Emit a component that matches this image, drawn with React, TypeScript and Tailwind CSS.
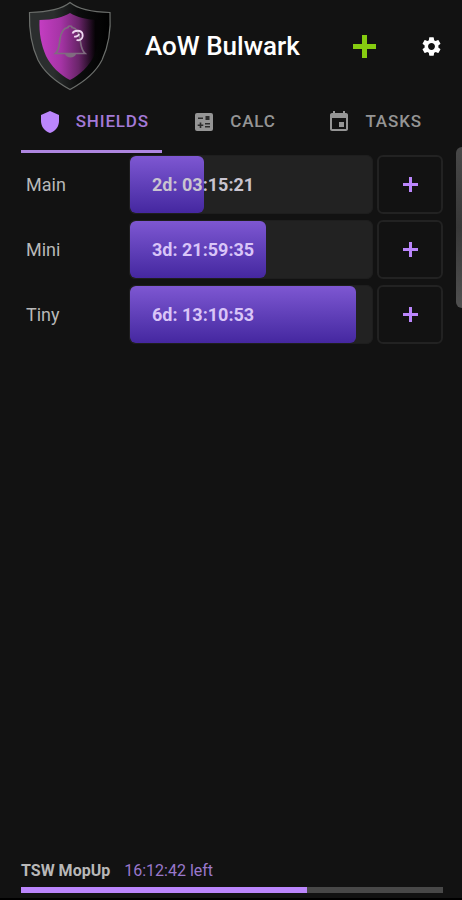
import { useState } from "react";
import { MdSettings, MdShield } from "react-icons/md";

const TABS = ["SHIELDS", "CALC", "TASKS"] as const;
type Tab = (typeof TABS)[number];

const SHIELDS = [
  { name: "Main", time: "2d: 03:15:21", percent: 30.5 },
  { name: "Mini", time: "3d: 21:59:35", percent: 56 },
  { name: "Tiny", time: "6d: 13:10:53", percent: 93.5 },
];

function Logo() {
  return (
    <svg width="86" height="92" viewBox="0 0 86 92" fill="none" aria-hidden="true">
      <defs>
        <linearGradient id="rim" x1="0" x2="1" y1="0" y2="0">
          <stop offset="0.3" stopColor="#2b2e2e" />
          <stop offset="0.6" stopColor="#0c0d0d" />
          <stop offset="1" stopColor="#000000" />
        </linearGradient>
        <linearGradient id="face" x1="0" x2="1" y1="0" y2="0">
          <stop offset="0" stopColor="#c43dc2" />
          <stop offset="0.35" stopColor="#a634a6" />
          <stop offset="0.65" stopColor="#682468" />
          <stop offset="0.92" stopColor="#050305" />
        </linearGradient>
      </defs>
      <path
        d="M43 2.500C51 9 64 12 83 12.500C84 29 82 45 75 60C68 74 55 83 43 89.500C31 83 18 74 11 60C4 45 2 29 2.500 12.500C21 12 35 9 43 2.500Z"
        fill="url(#rim)"
        stroke="#6b6e6b"
        strokeWidth="1.200"
      />
      <path
        d="M43 13C50 17 59 20 73 20C74 33 72 44 67 56C62 66 53 75 43 80C33 75 24 66 19 56C14 44 12 33 12.500 20C27 20 36 17 43 13Z"
        fill="url(#face)"
      />
      <path
        d="M28.500 53.500C32.500 50 32 45 33 39C34 32 37 28 41 27.500C41 25.500 45 25.500 45 27.500C49 28 52 32 53 39C54 45 54 50 58 53.500Z"
        stroke="#806b80"
        strokeWidth="1.700"
      />
      <path d="M38 54H49C48 58.500 39 58.500 38 54Z" fill="#806b80" />
      <path
        d="M45.500 33.500C47 30 54.500 29.500 55.500 34C56.500 38.500 53 41 49.500 40M47 36.500C49 37 51.500 36 52 34"
        stroke="#efd7f1"
        strokeWidth="1.800"
      />
    </svg>
  );
}

function CalendarIcon() {
  return (
    <svg width="24" height="24" viewBox="0 0 24 24" fill="currentColor" aria-hidden="true">
      <path d="M17 12h-5v5h5v-5zM16 1v2H8V1H6v2H5c-1.110 0-1.990.9-1.990 2L3 19c0 1.100.89 2 2 2h14c1.100 0 2-.9 2-2V5c0-1.100-.9-2-2-2h-1V1h-2zm3 18H5V8h14v11z" />
    </svg>
  );
}

function CalcIcon() {
  return (
    <svg width="24" height="24" viewBox="0 0 24 24" aria-hidden="true">
      <rect x="3" y="3" width="18" height="18" rx="2" fill="currentColor" />
      <g fill="#2c2c2c">
        <rect x="6" y="7.500" width="5" height="1.500" />
        <rect x="13.500" y="6" width="4" height="4" />
        <path d="M7.700 12.500h1.600v2h2v1.600h-2v2H7.700v-2h-2v-1.600h2z" />
        <rect x="13" y="13" width="5" height="1.500" />
        <rect x="13" y="16" width="5" height="1.500" />
      </g>
    </svg>
  );
}

function TabIcon({ tab }: { tab: Tab }) {
  if (tab === "SHIELDS") return <MdShield size={24} className="text-[#bb86fc]" aria-hidden="true" />;
  if (tab === "CALC") return <CalcIcon />;
  return <CalendarIcon />;
}

function PlusIcon({ size, bar }: { size: number; bar: number }) {
  const start = (size - bar) / 2;
  return (
    <svg width={size} height={size} fill="currentColor" aria-hidden="true">
      <rect x={start} y="0" width={bar} height={size} />
      <rect x="0" y={start} width={size} height={bar} />
    </svg>
  );
}

export default function App() {
  const [active, setActive] = useState<Tab>("SHIELDS");

  return (
    <div className="relative flex min-h-screen flex-col border-b-2 border-black bg-[#121212] pr-[19px] pl-[21px] font-['Roboto',sans-serif] text-[#b8b8b8]">
      <header className="flex h-23 items-center pl-1.5">
        <Logo />
        <h1 className="ml-8 flex-1 text-[26px] leading-8 font-medium whitespace-nowrap text-white">AoW Bulwark</h1>
        <button type="button" aria-label="Add shield" className="text-[#86cc10]">
          <PlusIcon size={23} bar={5} />
        </button>
        <button type="button" aria-label="Settings" className="ml-11 text-white">
          <MdSettings size={23} aria-hidden="true" />
        </button>
      </header>

      <nav role="tablist" className="grid grid-cols-3">
        {TABS.map((tab) => (
          <button
            key={tab}
            type="button"
            role="tab"
            aria-selected={active === tab}
            onClick={() => setActive(tab)}
            className={`flex h-[61px] items-center justify-center gap-3.5 border-b-3 pt-0.5 pl-1 text-[17px] font-medium tracking-wider ${
              active === tab ? "border-[#ae86e0] text-[#a47ad8]" : "border-transparent text-[#959595]"
            }`}
          >
            <TabIcon tab={tab} />
            {tab}
          </button>
        ))}
      </nav>

      <main className="flex flex-1 flex-col gap-1.5 pt-0.5">
        {SHIELDS.map((shield) => (
          <div key={shield.name} className="flex h-[59px] items-stretch gap-1">
            <span className="flex w-26 shrink-0 items-center pt-px pl-[5px] text-lg">{shield.name}</span>
            <div className="relative flex flex-1 items-center overflow-hidden rounded-md border border-[#1e1e1e] bg-[#222222]">
              <div
                className="absolute inset-y-0 left-0 rounded-md bg-linear-to-b from-[#7e57d2] to-[#4527a0]"
                style={{ width: `${shield.percent}%` }}
              />
              <span
                className={`relative pt-px pl-[22px] text-lg font-bold ${
                  shield.percent > 50 ? "text-[#d9c5f8]" : "text-[#c9c4d0]"
                }`}
              >
                {shield.time}
              </span>
            </div>
            <button
              type="button"
              aria-label={`Extend ${shield.name}`}
              className="flex w-[66px] shrink-0 items-center justify-center rounded-md border-2 border-[#222222] text-[#bb86fc]"
            >
              <PlusIcon size={15} bar={3} />
            </button>
          </div>
        ))}
      </main>

      <footer className="pb-[5px]">
        <p className="mb-1 flex gap-3.5 text-base">
          <span className="font-bold">TSW MopUp</span>
          <span className="text-[#9a78cc]">16:12:42 left</span>
        </p>
        <div className="h-1.5 bg-[#484848]">
          <div className="h-full bg-[#bb86fc]" style={{ width: "67.700%" }} />
        </div>
      </footer>

      <div className="absolute top-[147px] right-0 h-[161px] w-1.5 rounded-l-md bg-linear-to-b from-[#484848] via-[#383838] to-[#505050]" />
    </div>
  );
}
